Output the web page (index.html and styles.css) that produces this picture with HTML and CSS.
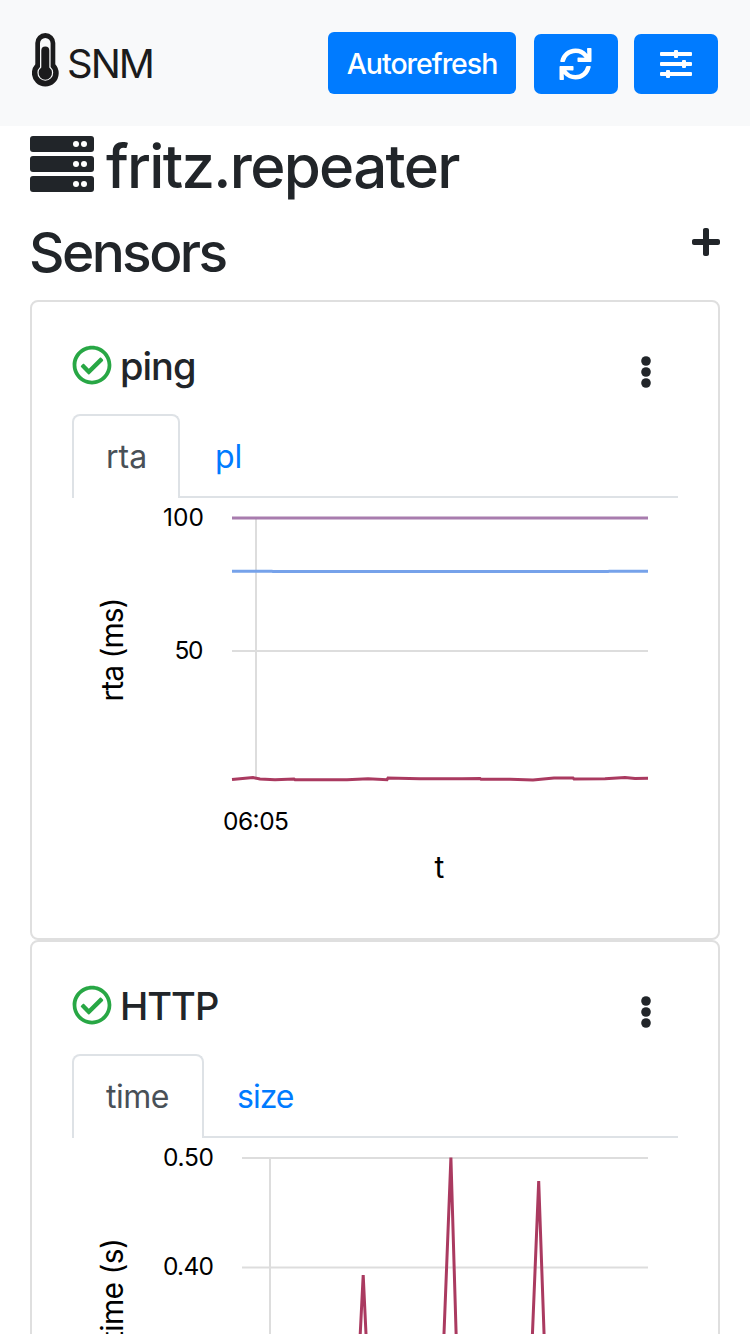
FILE: index.html
```html
<!DOCTYPE html>
<html lang="en">
<head>
<meta charset="utf-8">
<title>SNM</title>
<link rel="stylesheet" href="styles.css">
</head>
<body>
<svg class="defs" aria-hidden="true">
  <symbol id="ok" viewBox="0 0 512 512"><path d="M256 8C119.033 8 8 119.033 8 256s111.033 248 248 248 248-111.033 248-248S392.967 8 256 8zm0 48c110.532 0 200 89.451 200 200 0 110.532-89.451 200-200 200-110.532 0-200-89.451-200-200 0-110.532 89.451-200 200-200m140.204 130.267l-22.536-22.718c-4.667-4.705-12.265-4.736-16.97-.068L215.346 303.697l-59.792-60.277c-4.667-4.705-12.265-4.736-16.97-.069l-22.719 22.536c-4.705 4.667-4.736 12.265-.068 16.971l90.781 91.516c4.667 4.705 12.265 4.736 16.97.068l172.589-171.204c4.704-4.668 4.734-12.266.067-16.971z"/></symbol>
  <symbol id="dots" viewBox="0 0 12 34"><circle cx="6" cy="6" r="4.8"/><circle cx="6" cy="17" r="4.8"/><circle cx="6" cy="28" r="4.8"/></symbol>
</svg>
<header class="navbar">
  <a class="brand">
    <svg class="brand-icon" viewBox="0 0 28 54"><path fill="#1b1b1c" d="M3.300 10a10 10 0 0 1 20 0v21.200a13.400 13.400 0 1 1-20 0z"/><path fill="#f8f9fa" d="M8 10.300a5.300 5.300 0 0 1 10.600 0v23.600a7.900 7.900 0 1 1-10.600 0z"/><path fill="#1b1b1c" d="M9.300 17.600a4 4 0 0 1 8 0v17a6.700 6.700 0 1 1-8 0z"/></svg>
    <span class="brand-name">SNM</span>
  </a>
  <div class="actions">
    <button class="btn btn-auto"><span>Autorefresh</span></button>
    <button class="btn btn-icon" aria-label="Refresh"><svg class="sync" viewBox="0 0 512 512"><path d="M440.65 12.57l4 82.77A247.16 247.16 0 0 0 255.83 8C134.73 8 33.91 94.92 12.29 209.82A12 12 0 0 0 24.09 224h49.05a12 12 0 0 0 11.67-9.26 175.91 175.91 0 0 1 317-56.94l-101.46-4.86a12 12 0 0 0-12.57 12v47.41a12 12 0 0 0 12 12H500a12 12 0 0 0 12-12V12a12 12 0 0 0-12-12h-47.37a12 12 0 0 0-11.98 12.57zM255.83 432a175.61 175.61 0 0 1-146-77.8l101.8 4.87a12 12 0 0 0 12.57-12v-47.4a12 12 0 0 0-12-12H12a12 12 0 0 0-12 12V500a12 12 0 0 0 12 12h47.35a12 12 0 0 0 12-12.6l-4.15-82.57A247.17 247.17 0 0 0 255.83 504c121.11 0 221.93-86.92 243.55-201.82a12 12 0 0 0-11.8-14.18h-49.05a12 12 0 0 0-11.67 9.26A175.86 175.86 0 0 1 255.83 432z"/></svg></button>
    <button class="btn btn-icon" aria-label="Settings"><svg class="sliders" viewBox="0 0 32 28"><rect y="2" width="32" height="4" rx="1"/><rect y="12" width="32" height="4" rx="1"/><rect y="22" width="32" height="4" rx="1"/><rect x="14" width="4" height="8" rx="1"/><rect x="22" y="10" width="4" height="8" rx="1"/><rect x="6" y="20" width="4" height="8" rx="1"/></svg></button>
  </div>
</header>
<main class="container">
  <h1 class="host">
    <svg class="server" viewBox="0 0 64 56"><g fill="#212529"><rect width="64" height="16" rx="3"/><rect y="20" width="64" height="16" rx="3"/><rect y="40" width="64" height="16" rx="3"/></g><g fill="#fff"><circle cx="46" cy="8" r="3"/><circle cx="54" cy="8" r="3"/><circle cx="46" cy="28" r="3"/><circle cx="54" cy="28" r="3"/><circle cx="46" cy="48" r="3"/><circle cx="54" cy="48" r="3"/></g></svg>
    <span>fritz.repeater</span>
  </h1>
  <div class="section-head">
    <h2>Sensors</h2>
    <svg class="plus" viewBox="0 32 448 448"><path d="M416 208H272V64c0-17.67-14.33-32-32-32h-32c-17.67 0-32 14.33-32 32v144H32c-17.67 0-32 14.33-32 32v32c0 17.67 14.33 32 32 32h144v144c0 17.67 14.33 32 32 32h32c17.67 0 32-14.33 32-32V304h144c17.67 0 32-14.33 32-32v-32c0-17.67-14.33-32-32-32z"/></svg>
  </div>
  <section class="card">
    <div class="card-head">
      <svg class="ok"><use href="#ok"/></svg>
      <h3>ping</h3>
      <svg class="dots"><use href="#dots"/></svg>
    </div>
    <nav class="tabs"><a class="tab active tab-rta">rta</a><a class="tab tab-pl">pl</a></nav>
    <svg class="chart" viewBox="72 498 606 398">
      <g stroke="#ddd" stroke-width="2"><path d="M232 518H648M232 651H648M256 518V780"/></g>
      <path class="line" stroke="#a87cae" d="M232 518H648"/>
      <path class="line" stroke="#76a2ea" d="M232 571.3H272L273 571.6H608L609 571.3H648"/>
      <path class="line" stroke="#aa3a60" d="M232 779.6L253 777.6L260 779L275 779.8L294 779L295 779.7H347L368 778.7L387 779.7L388 778L420 778.8H462L480 778.4L481 779.3H510L533 780L554 778L573 778L574 779L605 778.7L625 777.4L635 778.6L648 778.3"/>
      <g class="tick">
        <text x="163" y="526" textLength="41">100</text>
        <text x="174.500" y="659" textLength="29">50</text>
        <text x="223" y="830" textLength="66">06:05</text>
      </g>
      <text class="axis" x="434.500" y="878">t</text>
      <text class="axis" transform="translate(122.500 701.500) rotate(-90)" textLength="104">rta (ms)</text>
    </svg>
  </section>
  <section class="card">
    <div class="card-head">
      <svg class="ok"><use href="#ok"/></svg>
      <h3 class="upper">HTTP</h3>
      <svg class="dots"><use href="#dots"/></svg>
    </div>
    <nav class="tabs"><a class="tab active tab-time">time</a><a class="tab tab-size">size</a></nav>
    <svg class="chart" viewBox="72 1138 606 398">
      <path stroke="#ddd" stroke-width="2" d="M242 1158H648M242 1267.400H648M270 1158V1420"/>
      <path class="line" stroke="#aa3a60" stroke-linejoin="bevel" d="M356 1418L363.200 1275L370 1418M440.700 1418L450.900 1157.500L458.600 1418M529 1418L538.700 1181L547 1418"/>
      <g class="tick">
        <text x="163" y="1166" textLength="51">0.50</text>
        <text x="163" y="1275" textLength="51">0.40</text>
      </g>
      <text class="axis" transform="translate(122.500 1341) rotate(-90)" textLength="103">time (s)</text>
    </svg>
  </section>
</main>
</body>
</html>
```
FILE: styles.css
```css
* { box-sizing: border-box; }
html { height: 1334px; overflow: hidden; }
body { margin: 0; height: 1334px; overflow: hidden; background: #fff; color: #212529; font-family: Inter, "Liberation Sans", sans-serif; }
h1, h2, h3 { margin: 0; font-weight: 500; white-space: nowrap; }
.defs { display: none; }
.navbar { height: 126px; background: #f8f9fa; padding: 32px 32px 0; display: flex; justify-content: space-between; }
.brand { display: flex; height: 62px; align-items: center; gap: 7px; padding-bottom: 6px; color: #1b1b1c; }
.brand-icon { width: 28px; height: 54px; }
.brand-name { font-size: 40px; line-height: 48px; padding-top: 8px; letter-spacing: -2px; }
.actions { display: flex; align-items: flex-end; height: 62px; gap: 16px; }
.btn { border: 0; padding: 0; border-radius: 7px; background: #007bff; color: #fff; fill: #fff; display: flex; align-items: center; justify-content: center; }
.btn-auto { width: 188px; height: 62px; margin-right: 2px; font: 500 28.500px/42px Inter, sans-serif; letter-spacing: -1px; padding-top: 2px; border-radius: 6px; }
.btn-icon { width: 84px; height: 60px; }
.sync { width: 33px; height: 32px; margin-right: 2px; }
.sliders { width: 32px; height: 28px; }
.container { padding: 0 30px; }
.host { display: flex; height: 92px; padding-top: 10px; gap: 12px; font-size: 60px; line-height: 60px; letter-spacing: -1.700px; }
.server { width: 64px; height: 56px; }
.section-head { display: flex; justify-content: space-between; height: 82px; padding-top: 5px; }
.section-head h2 { font-size: 55px; line-height: 58px; letter-spacing: -2.600px; margin-left: -1px; }
.plus { width: 28px; height: 28px; margin-top: 5px; fill: #212529; }
.card { height: 640px; border: 2px solid #dfdfdf; border-radius: 8px; padding: 40px 40px 0; }
.card-head { display: flex; height: 72px; padding-top: 3px; }
.card-head h3 { flex: 1; margin-left: 8px; font-size: 38px; line-height: 42px; letter-spacing: -1px; }
.ok { width: 40px; height: 40px; fill: #28a745; }
.dots { width: 12px; height: 34px; margin: 10px 26px 0 0; fill: #212529; }
.tabs { display: flex; height: 84px; border-bottom: 2px solid #dee2e6; }
.tab { height: 84px; padding: 18px 32px 0; border: 2px solid transparent; border-bottom: 0; font-size: 32px; line-height: 46px; color: #007bff; }
.tab.active { color: #495057; background: #fff; border-color: #dee2e6; border-radius: 8px 8px 0 0; }
.tab-rta { width: 108px; }
.tab-pl { padding-left: 33px; }
.tab-time { width: 132px; letter-spacing: -0.500px; }
.tab-size { letter-spacing: -1px; padding-left: 31px; }
.chart { display: block; width: 606px; height: 398px; }
.line { fill: none; stroke-width: 3; }
.tick { font-size: 24.500px; fill: #000; }
.axis { font-size: 30px; fill: #000; }
```
